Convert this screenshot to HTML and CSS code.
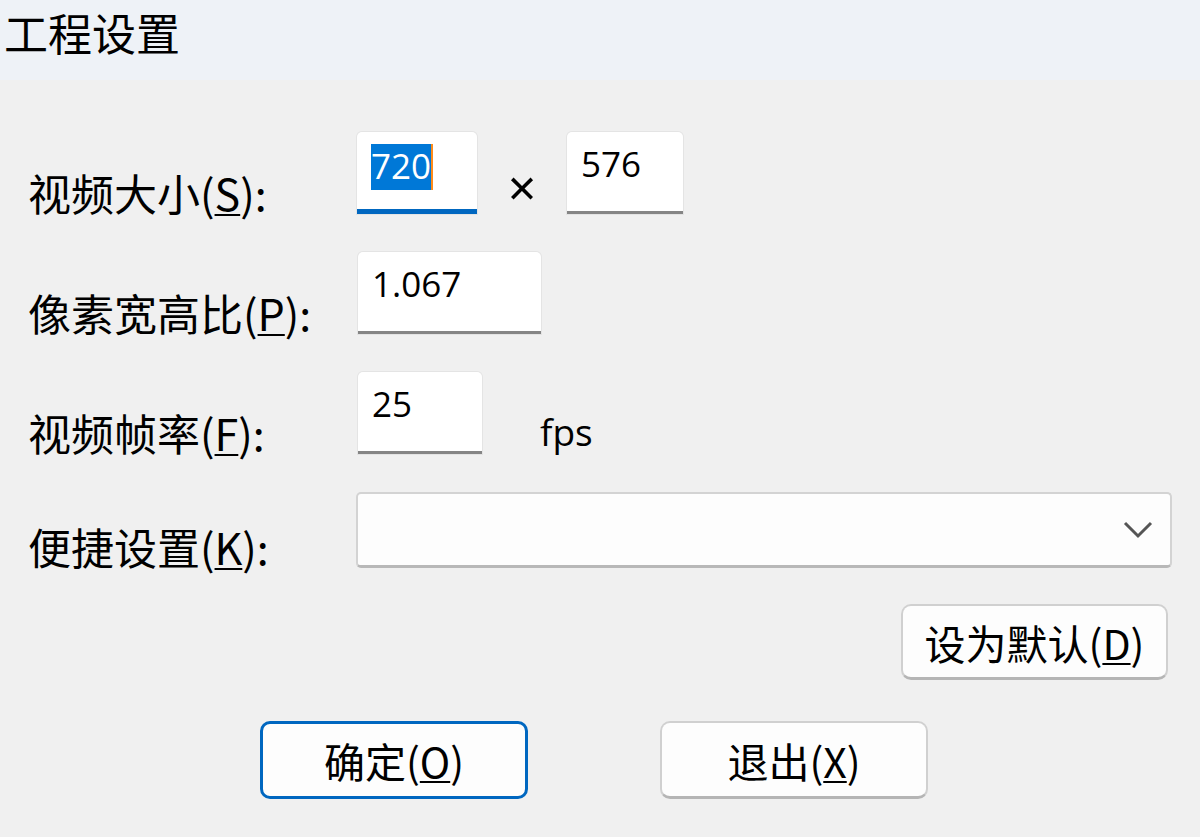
FILE: index.html
```html
<!DOCTYPE html>
<html lang="zh-CN">
<head>
    <meta charset="UTF-8">
    <title>工程设置</title>
    <link rel="stylesheet" href="styles.css">
</head>
<body>
    <div class="titlebar">工程设置</div>

    <div class="form">
        <div class="row">
            <label class="label">视频大小(<u>S</u>):</label>
            <div class="field focused w-size"><span class="sel">720</span><span class="caret"></span></div>
            <span class="times">×</span>
            <div class="field w-size2">576</div>
        </div>

        <div class="row">
            <label class="label">像素宽高比(<u>P</u>):</label>
            <div class="field w-ratio">1.067</div>
        </div>

        <div class="row">
            <label class="label">视频帧率(<u>F</u>):</label>
            <div class="field w-fps">25</div>
            <span class="unit">fps</span>
        </div>

        <div class="row row-combo">
            <label class="label">便捷设置(<u>K</u>):</label>
            <div class="combo">
                <svg class="chevron" width="32" height="20" viewBox="0 0 32 20">
                    <polyline points="3,3 16,16 29,3" fill="none" stroke="#555" stroke-width="3"/>
                </svg>
            </div>
        </div>

        <div class="default-line">
            <button class="btn btn-default">设为默认(<u>D</u>)</button>
        </div>

        <div class="actions">
            <button class="btn btn-main primary">确定(<u>O</u>)</button>
            <button class="btn btn-main">退出(<u>X</u>)</button>
        </div>
    </div>
</body>
</html>
```

FILE: styles.css
```css
body {
    margin: 0;
    background: #f0f0f0;
    font-family: "Noto Sans CJK SC", "Noto Sans", sans-serif;
    color: #000;
    width: 1200px;
    height: 837px;
    overflow: hidden;
}

.titlebar {
    height: 80px;
    background: #eef2f7;
    font-size: 44px;
    line-height: 64px;
    padding-left: 4px;
}

.form {
    padding: 52px 28px 0 28px;
}

.row {
    display: flex;
    align-items: flex-end;
    height: 82px;
    margin-bottom: 38px;
}

.row-combo {
    height: 76px;
    margin-bottom: 36px;
}

.label {
    width: 328px;
    flex-shrink: 0;
    font-size: 43px;
    line-height: 43px;
}

u {
    text-underline-offset: 3px;
    text-decoration-thickness: 2px;
}

.field {
    box-sizing: border-box;
    height: 82px;
    background: #fff;
    border-radius: 5px 5px 0 0;
    border-bottom: 3px solid #858585;
    box-shadow: 0 0 0 1px #e4e4e4;
    font-family: "Open Sans", "Noto Sans", sans-serif;
    font-size: 35px;
    line-height: 40px;
    padding: 12px 0 0 14px;
    display: flex;
    align-items: flex-start;
}

.focused {
    border-bottom: 5px solid #0067c0;
}

.sel {
    background: #0078d7;
    color: #fff;
    padding: 2px 0 4px 0;
}

.caret {
    width: 2px;
    height: 46px;
    background: #ff8c1a;
}

.w-size { width: 120px; margin-left: 1px; }
.w-size2 { width: 116px; }
.w-ratio { width: 183px; margin-left: 2px; }
.w-fps { width: 124px; margin-left: 2px; }

.times {
    width: 90px;
    text-align: center;
    font-family: "Noto Sans", sans-serif;
    font-size: 50px;
    line-height: 50px;
    margin-bottom: 2px;
}

.unit {
    font-family: "Open Sans", "Noto Sans", sans-serif;
    font-size: 37px;
    line-height: 37px;
    margin-left: 58px;
    margin-bottom: 4px;
}

.combo {
    box-sizing: border-box;
    flex: 1;
    height: 76px;
    background: #fdfdfd;
    border: 2px solid #d3d3d3;
    border-bottom: 3px solid #b8b8b8;
    border-radius: 5px;
    display: flex;
    align-items: center;
    justify-content: flex-end;
    padding-right: 16px;
}

.chevron {
    display: block;
}

.default-line {
    display: flex;
    justify-content: flex-end;
}

.btn {
    box-sizing: border-box;
    background: #fdfdfd;
    border: 2px solid #d0d0d0;
    border-bottom: 3px solid #b5b5b5;
    border-radius: 10px;
    font-family: "Noto Sans CJK SC", sans-serif;
    font-size: 41px;
    padding: 0;
    color: #000;
}

.btn-default {
    width: 267px;
    height: 76px;
    margin-right: 4px;
}

.actions {
    display: flex;
    gap: 132px;
    padding-left: 232px;
    margin-top: 41px;
}

.btn-main {
    width: 268px;
    height: 78px;
}

.primary {
    border: 3px solid #0067c0;
}
```
